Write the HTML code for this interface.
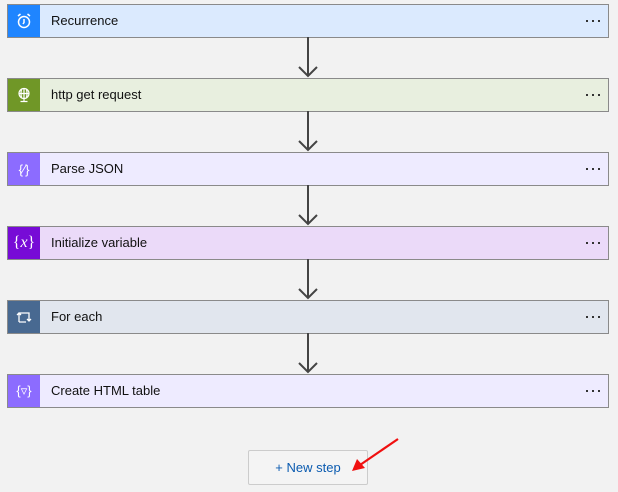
<!DOCTYPE html>
<html><head><style>
body{margin:0;width:618px;height:492px;background:#f2f2f2;font-family:"Segoe UI","Liberation Sans",sans-serif;position:relative;overflow:hidden}
.c{position:absolute;left:7px;width:600px;height:32px;border:1px solid #8a8a8a;}
.ic{position:absolute;left:0;top:0;width:32px;height:32px;display:flex;align-items:center;justify-content:center;color:#fff}
.t{position:absolute;left:43px;top:0;line-height:32px;font-size:13px;color:#111}
.d{position:absolute;right:8px;top:15px;width:14px;height:2px;background:linear-gradient(90deg,#333 2px,transparent 2px,transparent 6px,#333 6px,#333 8px,transparent 8px,transparent 12px,#333 12px)}
.a{position:absolute;left:298px;width:20px;height:41px}
</style></head><body>
<div class="c" style="top:4px;background:#dbeafe"><div class="ic" style="background:#1f85ff"><svg width="16" height="16" viewBox="0 0 16 16" fill="none" stroke="#fff" stroke-width="1.5"><circle cx="8" cy="9" r="5.5"/><path d="M8 6v3.5l-1 1.5M2 3l2.5-2M14 3l-2.5-2"/></svg></div><div class="t">Recurrence</div><div class="d"></div></div>
<div class="c" style="top:78px;background:#e8efdf"><div class="ic" style="background:#709727"><svg width="16" height="16" viewBox="0 0 16 16" fill="none" stroke="#fff" stroke-width="1.2"><circle cx="8" cy="6.5" r="5"/><path d="M3 6.5h10M8 1.5v10M5.5 2.5q-1 4 0 8M10.5 2.5q1 4 0 8M8 11.5v2.5M4.5 14.5h7"/></svg></div><div class="t">http get request</div><div class="d"></div></div>
<div class="c" style="top:152px;background:#eeebff"><div class="ic" style="background:#8c6cff;font-size:13px">{&#x2215;}</div><div class="t">Parse JSON</div><div class="d"></div></div>
<div class="c" style="top:226px;background:#ebdaf9"><div class="ic" style="background:#770bd6;font-family:'Liberation Serif',serif;font-size:16px">{<i>x</i>}</div><div class="t">Initialize variable</div><div class="d"></div></div>
<div class="c" style="top:300px;background:#e1e6ee"><div class="ic" style="background:#486991"><svg width="16" height="14" viewBox="0 0 16 14" fill="none" stroke="#fff" stroke-width="1.3"><path d="M3 12V3h10v8M1 5l2-2 2 2M11 9l2 2 2-2M3 12h7"/></svg></div><div class="t">For each</div><div class="d"></div></div>
<div class="c" style="top:374px;background:#eeebff"><div class="ic" style="background:#8c6cff;font-size:13px">{&#x25BF;}</div><div class="t">Create HTML table</div><div class="d"></div></div>
<svg class="a" style="top:37px" viewBox="0 0 20 41"><path d="M10 0v39M1 30l9 9 9-9" stroke="#444" stroke-width="2" fill="none"/></svg>
<svg class="a" style="top:111px" viewBox="0 0 20 41"><path d="M10 0v39M1 30l9 9 9-9" stroke="#444" stroke-width="2" fill="none"/></svg>
<svg class="a" style="top:185px" viewBox="0 0 20 41"><path d="M10 0v39M1 30l9 9 9-9" stroke="#444" stroke-width="2" fill="none"/></svg>
<svg class="a" style="top:259px" viewBox="0 0 20 41"><path d="M10 0v39M1 30l9 9 9-9" stroke="#444" stroke-width="2" fill="none"/></svg>
<svg class="a" style="top:333px" viewBox="0 0 20 41"><path d="M10 0v39M1 30l9 9 9-9" stroke="#444" stroke-width="2" fill="none"/></svg>
<div style="position:absolute;left:248px;top:450px;width:118px;height:33px;border:1px solid #ccc;background:#f4f4f4;border-radius:2px;text-align:center;line-height:34px;font-size:13px;color:#0b5bb0">+ New step</div>
<svg style="position:absolute;left:340px;top:435px" width="64" height="40" viewBox="0 0 64 40"><path d="M58 4L20 30" stroke="#f01010" stroke-width="2.2"/><path d="M12 36l5-12 8 9z" fill="#f01010"/></svg>
</body></html>
